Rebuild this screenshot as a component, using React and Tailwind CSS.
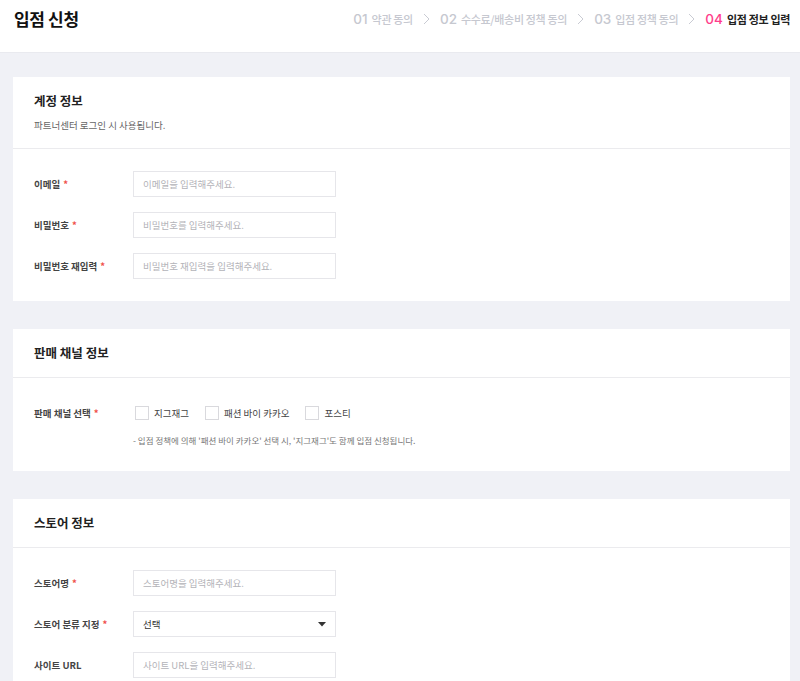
import React from "react";

const KR = { fontFamily: "'Noto Sans CJK KR', 'Noto Sans', sans-serif" };
const NUM = { fontFamily: "Inter, 'Noto Sans CJK KR', sans-serif" };

function Chevron() {
  return (
    <svg width="7" height="12" viewBox="0 0 7 12" className="shrink-0">
      <path d="M1 1 L6 6 L1 11" fill="none" stroke="#c9cbd3" strokeWidth="1" />
    </svg>
  );
}

function Step({ num, label, active }) {
  return (
    <div className="flex items-center gap-[4px]">
      <span
        style={NUM}
        className={`text-[13.5px] font-medium ${active ? "text-[#ff3e8c]" : "text-[#c6c8d0]"}`}
      >
        {num}
      </span>
      <span
        className={`text-[11px] tracking-[-0.03em] ${active ? "text-[#222] font-bold" : "text-[#c6c8d0] font-medium"}`}
      >
        {label}
      </span>
    </div>
  );
}

function Card({ title, subtitle, children, bodyClass = "pb-[22px]" }) {
  return (
    <section className="bg-white">
      <div className={`px-[21px] pt-[14px] ${subtitle ? "pb-[15px]" : "pb-[14px]"} border-b border-[#ebebee]`}>
        <h2 className="text-[12.5px] leading-[20px] font-bold text-[#222]">{title}</h2>
        {subtitle && (
          <p className="mt-[6px] text-[9.5px] leading-[16px] text-[#666]">{subtitle}</p>
        )}
      </div>
      <div className={`px-[21px] pt-[22px] ${bodyClass} flex flex-col gap-[15px]`}>{children}</div>
    </section>
  );
}

function Row({ label, required, children }) {
  return (
    <div className="flex items-center">
      <div className="w-[99px] shrink-0 text-[9.5px] font-semibold text-[#444]">
        {label}
        {required && <span className="text-[#f0504a] ml-[3px]">*</span>}
      </div>
      {children}
    </div>
  );
}

function Input({ placeholder }) {
  return (
    <div className="w-[203px] h-[26px] border border-[#e6e6ea] flex items-center px-[9px]">
      <span className="text-[9.5px] text-[#b3b3b8]">{placeholder}</span>
    </div>
  );
}

function Checkbox({ label }) {
  return (
    <div className="flex items-center gap-[5px]">
      <span className="w-[14px] h-[14px] border border-[#d9d9dd] bg-white" />
      <span className="text-[9.5px] text-[#444]">{label}</span>
    </div>
  );
}

export default function App() {
  return (
    <div style={KR} className="min-h-[681px] bg-[#f0f1f6]">
      <header className="h-[53px] bg-white border-b border-[#e9eaef] pl-[14px] pr-[10px] pt-[7px]">
        <div className="h-[24px] flex items-center justify-between">
          <h1 className="text-[17px] font-bold text-[#111] tracking-[-0.02em]">입점 신청</h1>
          <div className="flex items-center gap-[10px]">
            <Step num="01" label="약관 동의" />
            <Chevron />
            <Step num="02" label="수수료/배송비 정책 동의" />
            <Chevron />
            <Step num="03" label="입점 정책 동의" />
            <Chevron />
            <Step num="04" label="입점 정보 입력" active />
          </div>
        </div>
      </header>

      <main className="ml-[13px] mr-[10px] pt-[24px] flex flex-col gap-[28px] pb-[28px]">
        <Card title="계정 정보" subtitle="파트너센터 로그인 시 사용됩니다.">
          <Row label="이메일" required>
            <Input placeholder="이메일을 입력해주세요." />
          </Row>
          <Row label="비밀번호" required>
            <Input placeholder="비밀번호를 입력해주세요." />
          </Row>
          <Row label="비밀번호 재입력" required>
            <Input placeholder="비밀번호 재입력을 입력해주세요." />
          </Row>
        </Card>

        <Card title="판매 채널 정보" bodyClass="pb-[23px]">
          <div>
            <Row label="판매 채널 선택" required>
              <div className="h-[26px] flex items-center gap-[16px] pl-[2px]">
                <Checkbox label="지그재그" />
                <Checkbox label="패션 바이 카카오" />
                <Checkbox label="포스티" />
              </div>
            </Row>
            <p className="mt-[6px] ml-[99px] text-[8.5px] leading-[16px] text-[#777]">
              - 입점 정책에 의해 '패션 바이 카카오' 선택 시, '지그재그'도 함께 입점 신청됩니다.
            </p>
          </div>
        </Card>

        <Card title="스토어 정보">
          <Row label="스토어명" required>
            <Input placeholder="스토어명을 입력해주세요." />
          </Row>
          <Row label="스토어 분류 지정" required>
            <div className="w-[203px] h-[26px] border border-[#e6e6ea] flex items-center justify-between pl-[9px] pr-[9px]">
              <span className="text-[9.5px] text-[#333]">선택</span>
              <svg width="8" height="5" viewBox="0 0 8 5">
                <path d="M0 0 H8 L4 4.5 Z" fill="#333" />
              </svg>
            </div>
          </Row>
          <Row label="사이트 URL">
            <Input placeholder="사이트 URL을 입력해주세요." />
          </Row>
        </Card>
      </main>
    </div>
  );
}
